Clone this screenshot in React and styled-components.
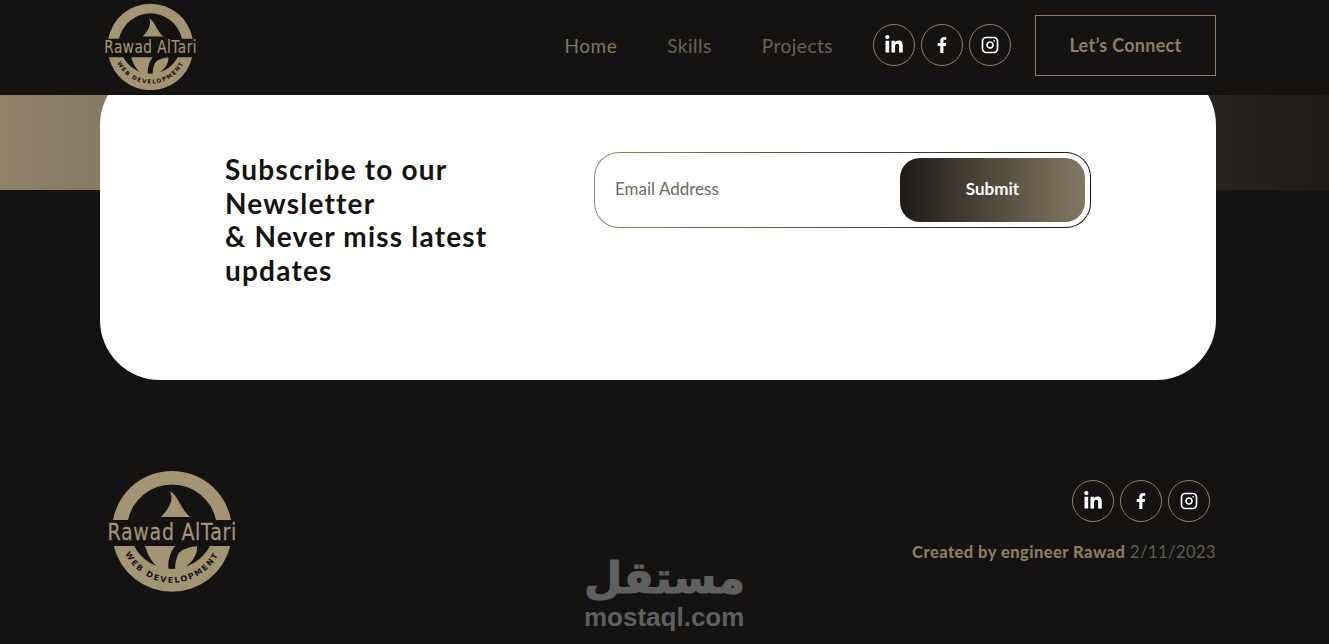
import React from 'react';
import styled, { createGlobalStyle } from 'styled-components';
import { FaLinkedinIn, FaFacebookF } from 'react-icons/fa';
import { Instagram } from 'lucide-react';

const tan = '#a39474';
const dark = '#141312';

const Logo = ({ width, id }) => (
    <svg width={width} viewBox="0 0 130 122" style={{ display: 'block' }}>
        <defs>
            <path id={id} d="M15 75 A52 52 0 0 0 115 75" />
        </defs>
        <g fill={tan}>
            <path d="M6 50 A60 60 0 0 1 124 50 L109 50 A45 45 0 0 0 21 50 Z" />
            <path d="M6.7 76 A60 60 0 0 0 123.3 76 L103 76 A43 43 0 0 1 27 76 Z" />
            <path d="M63 21 C72 27 73 38 83 47 L54 47 C62 38 67 31 63 21 Z" />
            <path d="M38 76 L68 76 C62 84 60 94 62 102 C50 100 42 90 38 76 Z" />
            <path d="M72 83 C76 79 82 77 90 76 C91 85 84 96 69 102 C67 96 69 88 72 83 Z" />
        </g>
        <g transform="translate(0.5 70) scale(1 1.25)">
            <text fill={tan} stroke={tan} strokeWidth="0.2" fontFamily="'DejaVu Sans', sans-serif" fontSize="19" letterSpacing="0.7">Rawad AlTari</text>
        </g>
        <text fill={dark} fontFamily="'DejaVu Sans', sans-serif" fontWeight="700" fontSize="8" letterSpacing="1.7">
            <textPath href={`#${id}`} startOffset="50%" textAnchor="middle">WEB DEVELOPMENT</textPath>
        </text>
    </svg>
);

const SocialLinks = () => (
    <Socials>
        <Social><FaLinkedinIn size={20} /></Social>
        <Social><FaFacebookF size={16} /></Social>
        <Social><Instagram size={18} strokeWidth={2.2} /></Social>
    </Socials>
);

const App = () => {
    return (
        <Page>
            <GlobalStyle />
            <Header>
                <Logo width={93} id="arc-top" />
                <Nav>
                    <NavLink $first>Home</NavLink>
                    <NavLink>Skills</NavLink>
                    <NavLink $last>Projects</NavLink>
                    <SocialLinks />
                    <Connect>Let’s Connect</Connect>
                </Nav>
            </Header>
            <Newsletter>
                <Card>
                    <Title>Subscribe to our Newsletter<br />&amp; Never miss latest updates</Title>
                    <FormBorder>
                        <Email>Email Address</Email>
                        <Submit>Submit</Submit>
                    </FormBorder>
                </Card>
            </Newsletter>
            <Footer>
                <Logo width={130} id="arc-bottom" />
                <FooterRight>
                    <SocialLinks />
                    <Credit><strong>Created by engineer Rawad</strong> 2/11/2023</Credit>
                </FooterRight>
            </Footer>
            <Watermark>
                <WatermarkArabic>مستقل</WatermarkArabic>
                <WatermarkLatin>mostaql.com</WatermarkLatin>
            </Watermark>
        </Page>
    );
};

export default App;

const GlobalStyle = createGlobalStyle`
    html, body {
        margin: 0;
        padding: 0;
        background-color: ${dark};
    }
    * {
        box-sizing: border-box;
    }
`;

const Page = styled.div`
    position: relative;
    height: 644px;
    overflow: hidden;
    background-color: ${dark};
    font-family: 'Lato', 'Open Sans', sans-serif;
`;

const Header = styled.header`
    position: relative;
    z-index: 2;
    height: 95px;
    padding: 3px 113px 0 104px;
    display: flex;
    align-items: flex-start;
    justify-content: space-between;
    background-color: ${dark};
`;

const Nav = styled.nav`
    height: 86px;
    display: flex;
    align-items: center;
    margin-top: -1px;
`;

const NavLink = styled.a`
    margin-right: ${props => (props.$last ? '40px' : '50px')};
    font-size: 19px;
    letter-spacing: 0.5px;
    color: ${props => (props.$first ? '#84795f' : '#6a6352')};
`;

const Socials = styled.div`
    display: flex;
    gap: 6px;
`;

const Social = styled.a`
    width: 42px;
    height: 42px;
    border-radius: 50%;
    border: 1px solid #8b7f66;
    color: #fff;
    display: flex;
    align-items: center;
    justify-content: center;
`;

const Connect = styled.a`
    width: 181px;
    height: 61px;
    margin-left: 24px;
    border: 1px solid #8b7f66;
    color: #8b7f66;
    font-size: 18px;
    font-weight: 700;
    letter-spacing: 0.3px;
    display: flex;
    align-items: center;
    justify-content: center;
`;

const Newsletter = styled.section`
    display: flow-root;
    padding: 0 113px 0 100px;
    background: linear-gradient(90deg, #8f836a, #1f1b18) top / 100% 95px no-repeat;
`;

const Card = styled.div`
    height: 315px;
    margin-top: -30px;
    padding: 87px 125px 0;
    border-radius: 60px;
    background-color: #fff;
    display: grid;
    grid-template-columns: 369px 497px;
    align-items: start;
`;

const Title = styled.h2`
    margin: 1px 0 0;
    width: 300px;
    font-size: 28px;
    line-height: 33.6px;
    font-weight: 700;
    letter-spacing: 1.2px;
    color: ${dark};
`;

const FormBorder = styled.form`
    height: 76px;
    margin: 0;
    padding: 5px;
    border: 1px solid transparent;
    border-radius: 25px;
    background: linear-gradient(#fff, #fff) padding-box, linear-gradient(90deg, #8f836a, #141312) border-box;
    display: flex;
    align-items: center;
    justify-content: space-between;
`;

const Email = styled.span`
    margin-left: 15px;
    padding-bottom: 4px;
    font-size: 17px;
    color: #6b6b63;
`;

const Submit = styled.button`
    width: 185px;
    height: 64px;
    padding: 0 0 4px;
    border: 0;
    border-radius: 20px;
    background: linear-gradient(90deg, #1e1a17, #837862);
    color: #fff;
    font-family: inherit;
    font-size: 17px;
    font-weight: 700;
`;

const Footer = styled.footer`
    padding: 90px 113px 0 107px;
    display: flex;
    align-items: flex-start;
    justify-content: space-between;
`;

const FooterRight = styled.div`
    padding-top: 10px;
    display: flex;
    flex-direction: column;
    align-items: flex-end;
    gap: 20px;

    ${Socials} {
        margin-right: 6px;
    }
`;

const Credit = styled.div`
    font-size: 16.5px;
    line-height: 20px;
    letter-spacing: 0.45px;
    color: #5f5e5a;

    strong {
        color: #8b7a60;
        font-weight: 900;
    }
`;

const Watermark = styled.div`
    position: absolute;
    left: 584px;
    top: 551px;
    width: 160px;
    color: #5f5f5f;
    text-align: center;
    white-space: nowrap;
`;

const WatermarkArabic = styled.div`
    font-family: 'DejaVu Sans', sans-serif;
    font-size: 44px;
    font-weight: 700;
    line-height: 54px;
    -webkit-text-stroke: 1.2px #5f5f5f;
`;

const WatermarkLatin = styled.div`
    font-family: 'Liberation Sans', sans-serif;
    font-size: 26px;
    font-weight: 700;
    line-height: 24px;
`;
